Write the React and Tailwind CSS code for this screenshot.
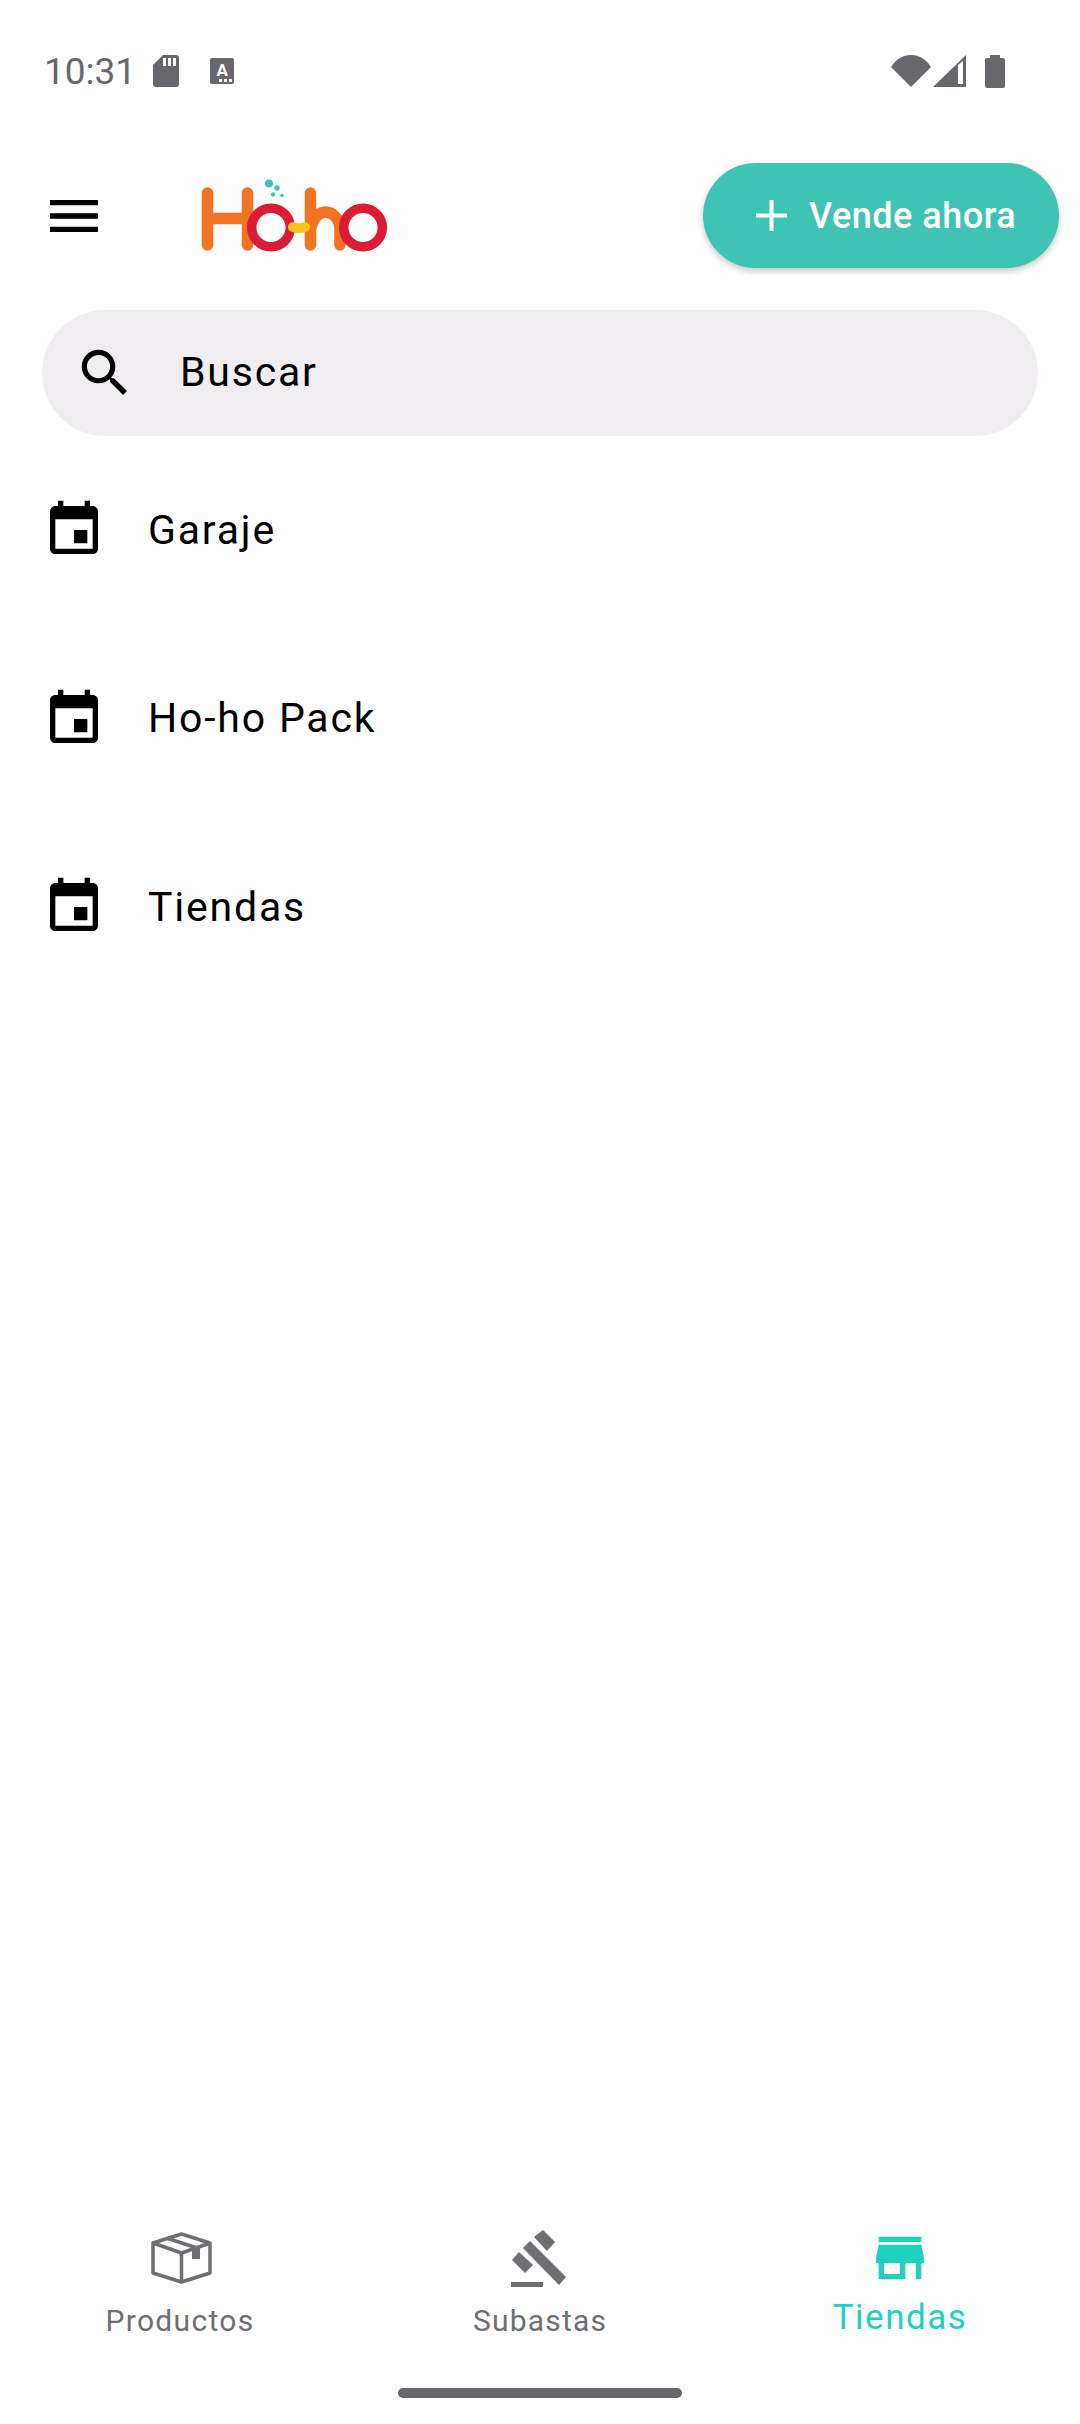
import React from 'react';

const font = { fontFamily: 'Roboto, sans-serif' };

function MenuIcon() {
  return (
    <svg viewBox="0 0 24 24" className="w-16 h-16" fill="#000">
      <path d="M3 18h18v-2H3v2zm0-5h18v-2H3v2zm0-7v2h18V6H3z" />
    </svg>
  );
}

function EventIcon() {
  return (
    <svg viewBox="0 0 24 24" className="w-16 h-16 shrink-0" fill="#000">
      <path d="M17 12h-5v5h5v-5zM16 1v2H8V1H6v2H5c-1.11 0-1.99.9-1.99 2L3 19c0 1.1.89 2 2 2h14c1.1 0 2-.9 2-2V5c0-1.1-.9-2-2-2h-1V1h-2zm3 18H5V8h14v11z" />
    </svg>
  );
}

function SearchIcon() {
  return (
    <svg viewBox="0 0 24 24" className="w-[62px] h-[62px] shrink-0" fill="#000">
      <path d="M15.5 14h-.79l-.28-.27C15.41 12.59 16 11.11 16 9.5 16 5.91 13.09 3 9.5 3S3 5.91 3 9.5 5.91 16 9.5 16c1.61 0 3.09-.59 4.23-1.57l.27.28v.79l5 4.99L20.49 19l-4.99-5zm-6 0C7.01 14 5 11.99 5 9.5S7.01 5 9.5 5 14 7.01 14 9.5 11.99 14 9.5 14z" />
    </svg>
  );
}

function Logo() {
  return (
    <svg viewBox="0 0 190 76" className="w-[190px] h-[76px]" fill="none" role="img" aria-label="Ho-ho">
      <g stroke="#f47321" strokeWidth="11.5" strokeLinecap="round">
        <path d="M6.500 15v52M46.500 15v52M6.500 40.500h40" />
        <path d="M109.500 15v52M109.500 51c2-10 8-17 15-17s14 6 14.500 17v16" />
      </g>
      <circle cx="70" cy="49.500" r="19.300" stroke="#dc1c37" strokeWidth="9.500" />
      <circle cx="162" cy="49.500" r="19.300" stroke="#dc1c37" strokeWidth="9.500" />
      <path d="M92 49q6 2.500 12 0" stroke="#fbc316" strokeWidth="10" strokeLinecap="round" />
      <circle cx="68" cy="5.500" r="4" fill="#3fc4b4" />
      <circle cx="76" cy="10" r="2.700" fill="#3fc4b4" />
      <circle cx="72" cy="16.500" r="2.200" fill="#3fc4b4" />
      <circle cx="81" cy="17.500" r="1.800" fill="#3fc4b4" />
    </svg>
  );
}

function BoxIcon() {
  return (
    <svg viewBox="0 0 80 70" className="w-20 h-[70px] -mt-[1px]" fill="none" stroke="#6f6e72" strokeWidth="3.500" strokeLinejoin="round">
      <path d="M41.500 9L70 18v30l-28.500 9L13 48V18z" />
      <path d="M13 18l28.500 10L70 18M41.500 28v29M28 13.500l29 9.500" />
      <path d="M52 25l8-3v12h-8z" fill="#6f6e72" stroke="none" />
    </svg>
  );
}

function GavelIcon() {
  return (
    <svg viewBox="0 0 80 75" className="w-20 h-[75px] -mt-[1px]" fill="#6f6e72">
      <path d="M34 12l9-7 12 12-8 9z" />
      <path d="M23 23l7-7 36 36-7 8z" />
      <path d="M12 35l7-8 14 13-8 8z" />
      <path d="M11 57h32v5H11z" />
    </svg>
  );
}

function StoreIcon() {
  return (
    <svg viewBox="0 0 24 24" className="w-16 h-16" fill="#1ed2c0">
      <path d="M20 4H4v2h16V4zm1 10v-2l-1-5H4l-1 5v2h1v6h10v-6h4v6h2v-6h1zm-9 4H6v-4h6v4z" />
    </svg>
  );
}

function StatusBar() {
  return (
    <div className="h-[142px] flex items-center pl-[44px] pr-[75px] shrink-0">
      <span className="text-[37px] leading-none text-[#68676b]">10:31</span>
      <svg viewBox="0 0 26 32" className="w-[26px] h-8 ml-[17px]" fill="#68676b">
        <path d="M10 0h13a3 3 0 0 1 3 3v26a3 3 0 0 1-3 3H3a3 3 0 0 1-3-3V10z" />
        <path d="M10 3h3v8h-3zM15 3h3v8h-3zM20 3h3v8h-3z" fill="#fff" />
      </svg>
      <div className="relative w-6 h-[26px] ml-[31px] bg-[#68676b] rounded-[2px] flex justify-center">
        <span className="text-[17px] leading-[25px] font-bold text-white">A</span>
        <div className="absolute right-[2px] bottom-[2px] flex gap-[2px]">
          <div className="w-[3px] h-[3px] bg-white" />
          <div className="w-[3px] h-[3px] bg-white" />
          <div className="w-[3px] h-[3px] bg-white" />
        </div>
      </div>
      <div className="ml-auto flex items-center">
        <svg viewBox="0 0 40 32" className="w-10 h-8" fill="#68676b">
          <path d="M0 12C5 4 12 0 20 0s15 4 20 12L20 32z" />
        </svg>
        <svg viewBox="0 0 33 32" className="w-[33px] h-8 ml-[2px]" fill="#68676b">
          <path fillRule="evenodd" d="M0 32L33 0v32zM25 10v19h5V6z" />
        </svg>
        <svg viewBox="0 0 20 33" className="w-5 h-[33px] ml-[19px]" fill="#68676b">
          <path d="M5 0h10v3h3a2 2 0 0 1 2 2v26a2 2 0 0 1-2 2H2a2 2 0 0 1-2-2V5a2 2 0 0 1 2-2h3z" />
        </svg>
      </div>
    </div>
  );
}

function ListRow({ label }) {
  return (
    <div className="h-[188.6px] flex items-center pl-[42px]">
      <EventIcon />
      <span className="ml-[42px] text-[41px] leading-none tracking-[1.800px] text-black">{label}</span>
    </div>
  );
}

export default function App() {
  return (
    <div className="h-[2424px] w-[1080px] bg-[#fefefe] flex flex-col overflow-hidden" style={font}>
      <StatusBar />

      <div className="h-[147px] flex items-center pl-[42px] pr-[21px] shrink-0">
        <MenuIcon />
        <div className="ml-[95px]">
          <Logo />
        </div>
        <button className="ml-auto w-[356px] h-[105px] rounded-full bg-[#3fc4b4] shadow-[0_3px_6px_rgba(0,0,0,0.22)] flex items-center pl-[53px]">
          <svg viewBox="0 0 31 31" className="w-[31px] h-[31px]" stroke="#fff" strokeWidth="4">
            <path d="M15.500 0v31M0 15.500h31" />
          </svg>
          <span className="ml-[22px] text-[36px] tracking-[0.5px] font-medium text-white leading-none">Vende ahora</span>
        </button>
      </div>

      <div className="mt-[21px] mx-[42px] h-[126px] rounded-full bg-[#efedf0] flex items-center pl-[32px] shrink-0">
        <SearchIcon />
        <span className="ml-[44px] -mt-[2px] text-[41px] leading-none tracking-[1.800px] text-black">Buscar</span>
      </div>

      <div className="flex flex-col">
        <ListRow label="Garaje" />
        <ListRow label="Ho-ho Pack" />
        <ListRow label="Tiendas" />
      </div>

      <div className="flex-1" />

      <div className="grid grid-cols-3 h-[162px] shrink-0">
        <div className="flex flex-col items-center">
          <BoxIcon />
          <span className="mt-[11px] text-[30px] leading-none tracking-[1.300px] text-[#6f6e72]">Productos</span>
        </div>
        <div className="flex flex-col items-center">
          <GavelIcon />
          <span className="mt-[6px] text-[30px] leading-none tracking-[1.200px] text-[#6f6e72]">Subastas</span>
        </div>
        <div className="flex flex-col items-center">
          <StoreIcon />
          <span className="mt-[10px] text-[35px] leading-none tracking-[1.500px] text-[#1ed2c0]">Tiendas</span>
        </div>
      </div>

      <div className="h-[36px] flex justify-center shrink-0">
        <div className="w-[284px] h-[10px] rounded-full bg-[#68676b]" />
      </div>
    </div>
  );
}
